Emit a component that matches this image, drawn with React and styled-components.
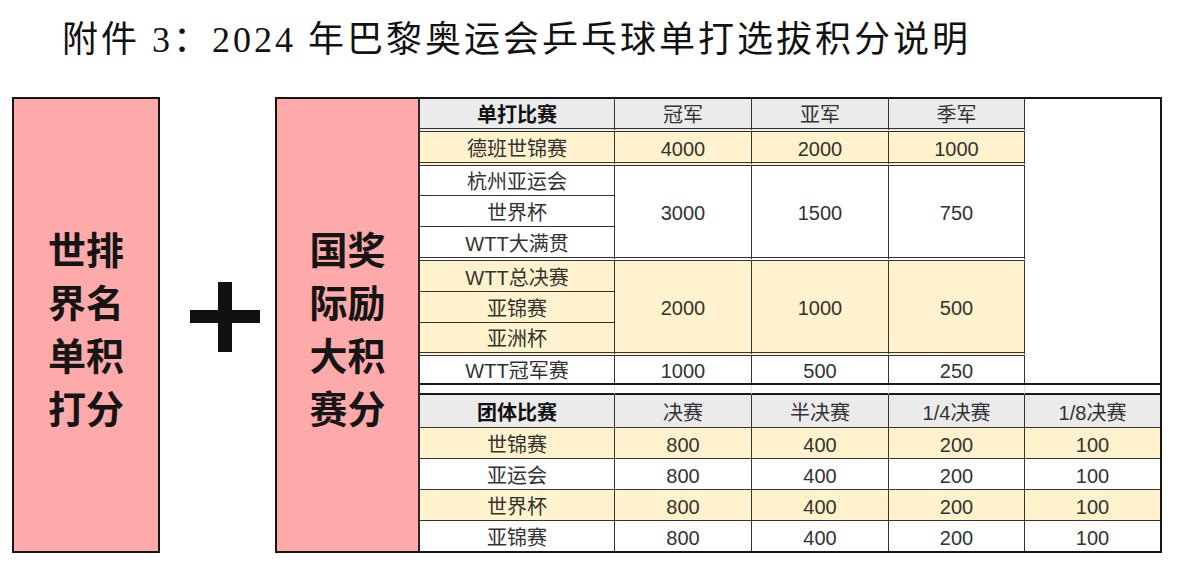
import React from 'react';
import styled, { createGlobalStyle, css } from 'styled-components';

const Global = createGlobalStyle`
  html, body {
    margin: 0;
    padding: 0;
    background: #ffffff;
  }
`;

const singles = [
  { name: '德班世锦赛', values: ['4000', '2000', '1000'], tone: 'gold', bottom: 'double' },
];

const groups = [
  {
    names: ['杭州亚运会', '世界杯', 'WTT大满贯'],
    values: ['3000', '1500', '750'],
    tone: 'plain',
  },
  {
    names: ['WTT总决赛', '亚锦赛', '亚洲杯'],
    values: ['2000', '1000', '500'],
    tone: 'gold',
  },
];

const teams = [
  { name: '世锦赛', tone: 'gold' },
  { name: '亚运会', tone: 'plain' },
  { name: '世界杯', tone: 'gold' },
  { name: '亚锦赛', tone: 'plain' },
];

const teamPoints = ['800', '400', '200', '100'];

export default function App() {
  return (
    <Page>
      <Global />
      <Title>附件 3：2024 年巴黎奥运会乒乓球单打选拔积分说明</Title>
      <Main>
        <PinkBox>
          <BigText>
            世排<br />界名<br />单积<br />打分
          </BigText>
        </PinkBox>
        <PlusWrap>
          <svg width="70" height="70" viewBox="0 0 70 70">
            <rect x="0" y="28" width="70" height="13" fill="#111" />
            <rect x="28" y="0" width="14" height="70" fill="#111" />
          </svg>
        </PlusWrap>
        <Board>
          <SidePanel>
            <BigText>
              国奖<br />际励<br />大积<br />赛分
            </BigText>
          </SidePanel>
          <Sheet>
            <Cell $tone="head" $bold $bottom="double">单打比赛</Cell>
            <Cell $tone="head" $bottom="double">冠军</Cell>
            <Cell $tone="head" $bottom="double">亚军</Cell>
            <Cell $tone="head" $bottom="double">季军</Cell>
            <Cell $tone="plain" $span={9} $bottom="thick" $last />

            {singles.map(row => (
              <React.Fragment key={row.name}>
                <Cell $tone={row.tone} $bottom={row.bottom}>{row.name}</Cell>
                {row.values.map((v, i) => (
                  <Cell key={i} $tone={row.tone} $bottom={row.bottom}>{v}</Cell>
                ))}
              </React.Fragment>
            ))}

            {groups.map(g => (
              <React.Fragment key={g.names[0]}>
                <Cell $tone={g.tone}>{g.names[0]}</Cell>
                {g.values.map((v, i) => (
                  <Cell key={i} $tone={g.tone} $span={3} $bottom="double">{v}</Cell>
                ))}
                <Cell $tone={g.tone}>{g.names[1]}</Cell>
                <Cell $tone={g.tone} $bottom="double">{g.names[2]}</Cell>
              </React.Fragment>
            ))}

            <Cell $tone="plain" $bottom="thick">WTT冠军赛</Cell>
            <Cell $tone="plain" $bottom="thick">1000</Cell>
            <Cell $tone="plain" $bottom="thick">500</Cell>
            <Cell $tone="plain" $bottom="thick">250</Cell>

            {[0, 1, 2, 3, 4].map(i => (
              <GapCell key={i} $last={i === 4} />
            ))}

            <Cell $tone="head" $bold>团体比赛</Cell>
            <Cell $tone="head">决赛</Cell>
            <Cell $tone="head">半决赛</Cell>
            <Cell $tone="head">1/4决赛</Cell>
            <Cell $tone="head" $last>1/8决赛</Cell>

            {teams.map((t, r) => (
              <React.Fragment key={t.name}>
                <Cell $tone={t.tone} $bottom={r === 3 ? 'none' : 'thin'}>{t.name}</Cell>
                {teamPoints.map((p, i) => (
                  <Cell
                    key={i}
                    $tone={t.tone}
                    $bottom={r === 3 ? 'none' : 'thin'}
                    $last={i === 3}
                  >
                    {p}
                  </Cell>
                ))}
              </React.Fragment>
            ))}
          </Sheet>
        </Board>
      </Main>
    </Page>
  );
}

const Page = styled.div`
  width: 1178px;
  height: 567px;
  overflow: hidden;
`;

const Title = styled.h1`
  margin: 0;
  padding: 22px 0 0 62px;
  height: 97px;
  box-sizing: border-box;
  font-family: 'Liberation Serif', 'Noto Sans CJK SC', serif;
  font-weight: 400;
  font-size: 36px;
  line-height: 36px;
  letter-spacing: 3px;
  color: #111;
  white-space: nowrap;
`;

const Main = styled.div`
  display: flex;
  align-items: stretch;
  padding-left: 12px;
  height: 456px;
`;

const BigText = styled.div`
  font-family: 'Noto Sans CJK SC', 'Liberation Sans', sans-serif;
  font-weight: 700;
  font-size: 38px;
  line-height: 53px;
  color: #151515;
  text-align: center;
`;

const PinkBox = styled.div`
  width: 148px;
  box-sizing: border-box;
  border: 2px solid #151515;
  background: #ffaaaa;
  display: flex;
  align-items: center;
  justify-content: center;
  padding-top: 4px;
`;

const PlusWrap = styled.div`
  width: 115px;
  box-sizing: border-box;
  padding: 185px 0 0 30px;
`;

const Board = styled.div`
  display: flex;
  width: 887px;
  box-sizing: border-box;
  border: 2px solid #151515;
`;

const SidePanel = styled.div`
  width: 143px;
  box-sizing: border-box;
  border-right: 2px solid #2a2a2a;
  background: #ffaaaa;
  display: flex;
  align-items: center;
  justify-content: center;
  padding-top: 4px;
`;

const Sheet = styled.div`
  display: grid;
  grid-template-columns: 195px 137px 137px 136px 135px;
  grid-template-rows: 33px 34px 30px 31px 34px 31px 31px 33px 29px 10px 33px 31px 31px 31px 30px;
  font-family: 'Liberation Sans', 'Noto Sans CJK SC', sans-serif;
  font-size: 20px;
`;

const tones = {
  head: '#ebebeb',
  gold: '#fff2cc',
  plain: '#ffffff',
};

const bottoms = {
  thin: '1px solid #333',
  double: '4px double #333',
  thick: '2px solid #1a1a1a',
  none: 'none',
};

const Cell = styled.div`
  box-sizing: border-box;
  display: flex;
  align-items: center;
  justify-content: center;
  padding-top: 3px;
  background: ${({ $tone }) => tones[$tone] || '#fff'};
  color: ${({ $bold }) => ($bold ? '#111' : '#333')};
  font-weight: ${({ $bold }) => ($bold ? 700 : 400)};
  border-right: ${({ $last }) => ($last ? 'none' : '1px solid #333')};
  border-bottom: ${({ $bottom }) => bottoms[$bottom || 'thin']};
  line-height: 1;
  white-space: nowrap;

  ${({ $span }) =>
    $span &&
    css`
      grid-row: span ${$span};
    `}
`;

const GapCell = styled.div`
  box-sizing: border-box;
  background: #fff;
  border-right: ${({ $last }) => ($last ? 'none' : '1px solid #dddddd')};
  border-bottom: 2px solid #1a1a1a;
`;
